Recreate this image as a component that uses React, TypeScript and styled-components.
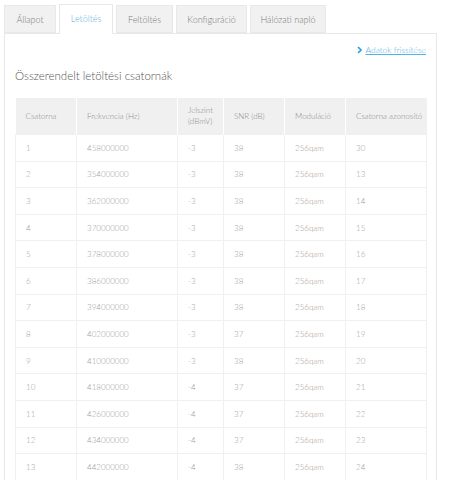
import styled, { createGlobalStyle } from 'styled-components';

const GlobalStyle = createGlobalStyle`
  body {
    margin: 0;
    background: #fff;
    font-family: 'Lato', 'Open Sans', sans-serif;
  }
`;

const Page = styled.div`
  padding: 4px 0 0 4px;
`;

const Tabs = styled.div`
  display: flex;
  align-items: flex-end;
  gap: 3px;
  position: relative;
  z-index: 1;
`;

const Tab = styled.div<{ $active?: boolean; $width: number }>`
  box-sizing: border-box;
  width: ${(p) => p.$width}px;
  height: ${(p) => (p.$active ? 30 : 28)}px;
  margin-bottom: ${(p) => (p.$active ? -1 : 0)}px;
  display: flex;
  align-items: center;
  justify-content: center;
  padding-bottom: ${(p) => (p.$active ? 2 : 0)}px;
  background: ${(p) => (p.$active ? '#fff' : '#f1f1f1')};
  border: 1px solid #e8e8e8;
  border-bottom: ${(p) => (p.$active ? 'none' : '1px solid #e8e8e8')};
  color: ${(p) => (p.$active ? '#62b0e0' : '#7a7a7a')};
  font-size: 9px;
  font-weight: 300;
`;

const Panel = styled.div`
  box-sizing: border-box;
  width: 433px;
  border: 1px solid #e8e8e8;
  border-bottom: none;
  padding: 9px 10px 0 10px;
`;

const LinkRow = styled.div`
  display: flex;
  justify-content: flex-end;
  align-items: center;
  height: 14px;
`;

const RefreshLink = styled.a`
  display: flex;
  align-items: center;
  gap: 3px;
  color: #4fb3e6;
  font-size: 8.5px;
  font-weight: 300;
  text-decoration: underline;
  cursor: pointer;
`;

const Heading = styled.h2`
  margin: 12px 0 16px 0;
  font-size: 11.5px;
  font-weight: 300;
  color: #555;
`;

const Table = styled.table`
  width: 411px;
  table-layout: fixed;
  border-collapse: collapse;
  font-size: 8px;
  font-weight: 300;
`;

const HeadCell = styled.th`
  height: 36px;
  padding: 0 2px 0 10px;
  background: #f0f0f0;
  border-right: 1px solid #fff;
  color: #8a8a8a;
  font-weight: 300;
  text-align: left;
  line-height: 11px;
  &:last-child {
    border-right: none;
  }
`;

const Cell = styled.td<{ $tone?: 'mod' }>`
  height: 25.6px;
  padding: 0 2px 0 10px;
  border: 1px solid #f0f0f0;
  color: ${(p) => (p.$tone === 'mod' ? '#a8968a' : '#a0a0a0')};
  white-space: nowrap;
`;

const Chevron = () => (
  <svg width="5" height="8" viewBox="0 0 5 8">
    <path d="M1 1 L4 4 L1 7" fill="none" stroke="#2aa4dd" strokeWidth="1.6" />
  </svg>
);

const tabs = [
  { label: 'Állapot', width: 52 },
  { label: 'Letöltés', width: 54, active: true },
  { label: 'Feltöltés', width: 57 },
  { label: 'Konfiguráció', width: 71 },
  { label: 'Hálózati napló', width: 76 },
];

const columns = [
  { label: 'Csatorna', width: 61 },
  { label: 'Frekvencia (Hz)', width: 101 },
  { label: 'Jelszint (dBmV)', width: 46 },
  { label: 'SNR (dB)', width: 61 },
  { label: 'Moduláció', width: 61 },
  { label: 'Csatorna azonosító', width: 81 },
];

const rows = [
  [1, '458000000', -3, 38, 30],
  [2, '354000000', -3, 38, 13],
  [3, '362000000', -3, 38, 14],
  [4, '370000000', -3, 38, 15],
  [5, '378000000', -3, 38, 16],
  [6, '386000000', -3, 38, 17],
  [7, '394000000', -3, 38, 18],
  [8, '402000000', -3, 37, 19],
  [9, '410000000', -3, 38, 20],
  [10, '418000000', -4, 37, 21],
  [11, '426000000', -4, 37, 22],
  [12, '434000000', -4, 37, 23],
  [13, '442000000', -4, 38, 24],
];

export default function App() {
  return (
    <Page>
      <GlobalStyle />
      <Tabs>
        {tabs.map((t) => (
          <Tab key={t.label} $active={t.active} $width={t.width}>
            {t.label}
          </Tab>
        ))}
      </Tabs>
      <Panel>
        <LinkRow>
          <RefreshLink>
            <Chevron />
            Adatok frissítése
          </RefreshLink>
        </LinkRow>
        <Heading>Összerendelt letöltési csatornák</Heading>
        <Table>
          <colgroup>
            {columns.map((c) => (
              <col key={c.label} style={{ width: c.width }} />
            ))}
          </colgroup>
          <thead>
            <tr>
              {columns.map((c) => (
                <HeadCell key={c.label}>{c.label}</HeadCell>
              ))}
            </tr>
          </thead>
          <tbody>
            {rows.map(([ch, freq, level, snr, id]) => (
              <tr key={ch}>
                <Cell>{ch}</Cell>
                <Cell>{freq}</Cell>
                <Cell>{level}</Cell>
                <Cell>{snr}</Cell>
                <Cell $tone="mod">256qam</Cell>
                <Cell>{id}</Cell>
              </tr>
            ))}
          </tbody>
        </Table>
      </Panel>
    </Page>
  );
}
